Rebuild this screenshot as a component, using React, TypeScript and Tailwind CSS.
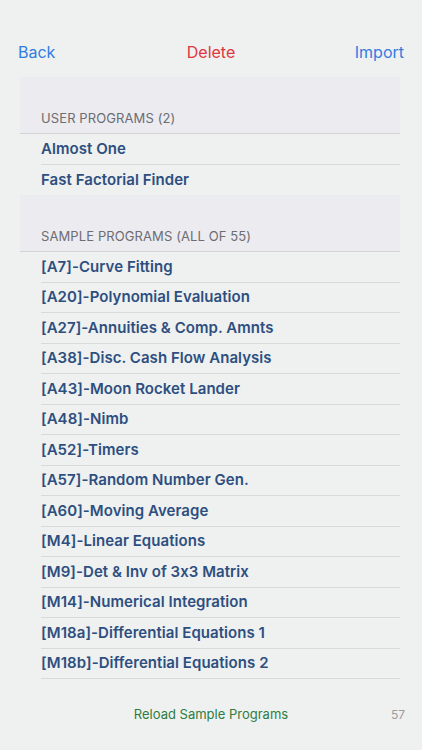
const userPrograms = ['Almost One', 'Fast Factorial Finder']

const samplePrograms = [
    '[A7]-Curve Fitting',
    '[A20]-Polynomial Evaluation',
    '[A27]-Annuities & Comp. Amnts',
    '[A38]-Disc. Cash Flow Analysis',
    '[A43]-Moon Rocket Lander',
    '[A48]-Nimb',
    '[A52]-Timers',
    '[A57]-Random Number Gen.',
    '[A60]-Moving Average',
    '[M4]-Linear Equations',
    '[M9]-Det & Inv of 3x3 Matrix',
    '[M14]-Numerical Integration',
    '[M18a]-Differential Equations 1',
    '[M18b]-Differential Equations 2',
]

function SectionHeader({ title }: { title: string }) {
    return (
        <div className="h-[57px] bg-[#ebebf0] border-b border-[#d3d3d8] flex items-end pl-[21px] pb-[5px]">
            <span className="text-[13px] text-[#6d6d72] tracking-[0.1px]">{title}</span>
        </div>
    )
}

function Row({ label, last }: { label: string; last?: boolean }) {
    return (
        <div className="h-[30.5px] pl-[21px] bg-[#eff0f0]">
            <div className={`h-full flex items-center border-[#d8d9da] ${last ? 'border-b-0' : 'border-b'}`}>
                <span className="text-[15px] font-semibold text-[#2d4f7f] tracking-[0.05px]">{label}</span>
            </div>
        </div>
    )
}

export default function App(): JSX.Element {
    return (
        <div className="w-[422px] h-[750px] bg-[#eff0f0] overflow-hidden" style={{ fontFamily: 'Inter, "Liberation Sans", sans-serif' }}>
            <div className="h-[77px] grid grid-cols-3 items-start px-[18px] pt-[40px] text-[16px]">
                <span className="text-[#2f7de1]">Back</span>
                <span className="text-[#e1363d] text-center">Delete</span>
                <span className="text-[#2f7de1] text-right">Import</span>
            </div>
            <div className="ml-[20px] w-[380px]">
                <SectionHeader title="USER PROGRAMS (2)" />
                {userPrograms.map((p, i) => (
                    <Row key={p} label={p} last={i === userPrograms.length - 1} />
                ))}
                <SectionHeader title="SAMPLE PROGRAMS (ALL OF 55)" />
                {samplePrograms.map((p) => (
                    <Row key={p} label={p} />
                ))}
            </div>
            <div className="relative mt-[26px] flex justify-center">
                <span className="text-[13px] text-[#2e7d3f]">Reload Sample Programs</span>
                <span className="absolute right-[17px] top-[1px] text-[12px] text-[#9b9b9b]">57</span>
            </div>
        </div>
    )
}
